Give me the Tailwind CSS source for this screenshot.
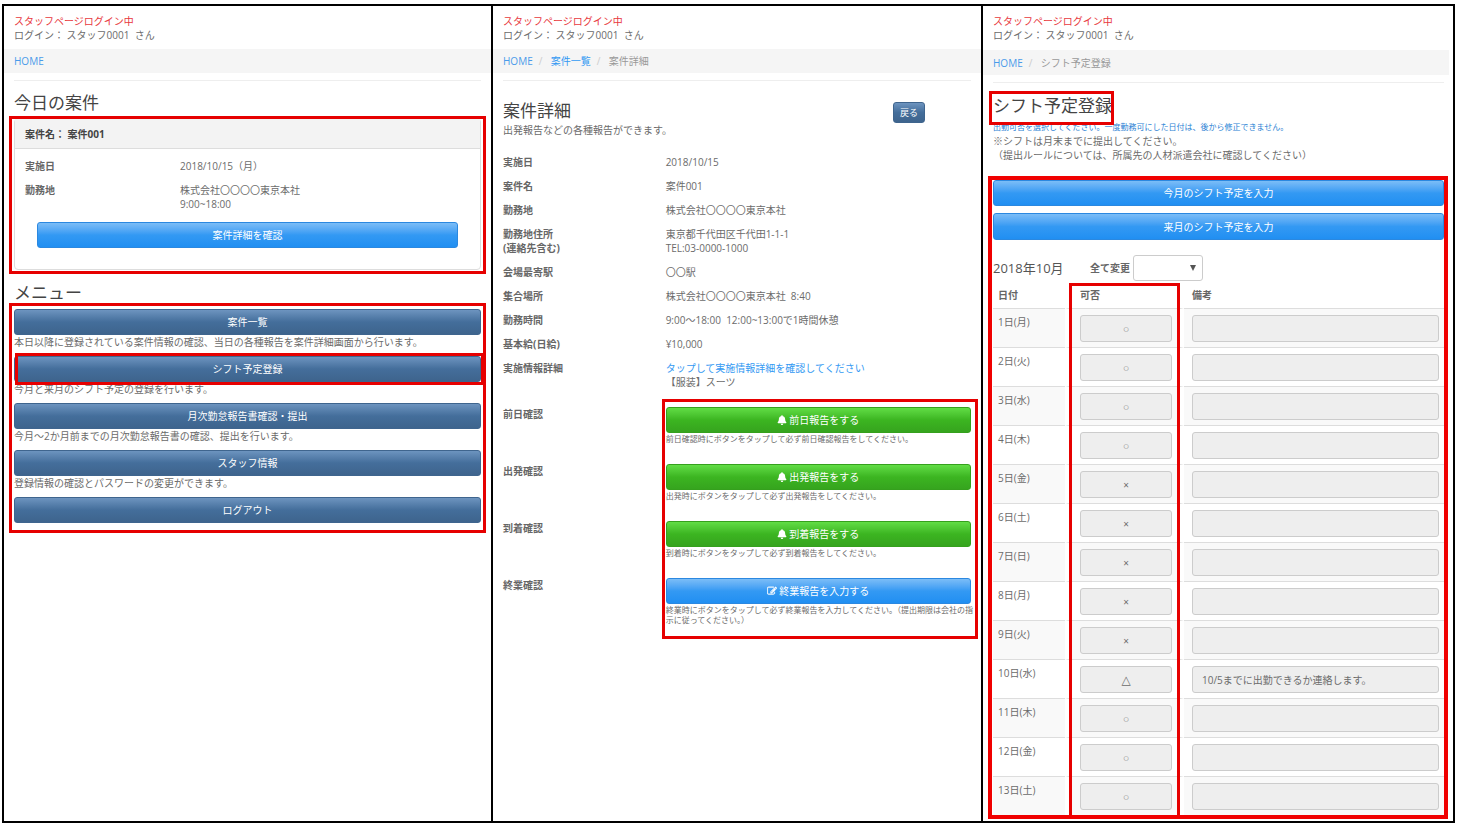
<!DOCTYPE html>
<html lang="ja">
<head>
<meta charset="utf-8">
<meta name="viewport" content="width=device-width, initial-scale=1">
<title>スタッフページ</title>
<script src="https://cdn.jsdelivr.net/npm/@tailwindcss/browser@4"></script>
</head>
<body class="min-h-screen bg-white flex font-['Open_Sans','Noto_Sans_CJK_JP',sans-serif] text-[10px] leading-[14px] text-[#6b6b6b]">

<svg class="hidden" aria-hidden="true">
  <symbol id="bell" viewBox="0 0 448 512"><path d="M224 512c35.32 0 63.97-28.65 63.97-64H160.03c0 35.35 28.65 64 63.97 64zm215.39-149.71c-19.32-20.76-55.47-51.99-55.47-154.29 0-77.7-54.48-139.9-127.94-155.16V32c0-17.67-14.32-32-31.98-32s-31.98 14.33-31.98 32v20.84C118.56 68.1 64.08 130.3 64.08 208c0 102.3-36.15 133.53-55.47 154.29-6 6.45-8.66 14.16-8.61 21.71.11 16.4 12.98 32 32.1 32h383.8c19.12 0 32-15.6 32.1-32 .05-7.55-2.61-15.27-8.61-21.71z"/></symbol>
  <symbol id="edit" viewBox="0 0 1792 1792"><path stroke="currentColor" stroke-width="60" d="M888 1184l116-116-152-152-116 116v56h96v96h56zm440-720q-16-16-33 1l-350 350q-17 17-1 33t33-1l350-350q17-17 1-33zm80 594v190q0 119-84.5 203.5t-203.5 84.5h-832q-119 0-203.5-84.5t-84.5-203.5v-832q0-119 84.5-203.5t203.5-84.5h832q63 0 117 25 15 7 18 23 3 17-9 29l-49 49q-14 14-32 8-23-6-45-6h-832q-66 0-113 47t-47 113v832q0 66 47 113t113 47h832q66 0 113-47t47-113v-126q0-13 9-22l64-64q15-15 35-7t20 29zm-96-738l288 288-672 672h-288v-288zm444 132l-92 92-288-288 92-92q28-28 68-28t68 28l152 152q28 28 28 68t-28 68z"/></symbol>
</svg>

<main class="grow grid grid-cols-[489fr_490fr_474fr] pt-1 pb-px pl-[2px] pr-[3px]">

  <!-- ホーム -->
  <section class="border-2 border-r-0 border-black">
    <header class="px-[10px] pt-2 pb-[7px]">
      <p class="text-[#e8383d]">スタッフページログイン中</p>
      <p>ログイン： スタッフ0001&nbsp; さん</p>
    </header>
    <nav class="bg-[#f5f5f5] h-6 px-[10px] flex items-center" aria-label="パンくず">
      <a href="#" class="text-[#4a9bea]">HOME</a>
    </nav>
    <div class="px-[10px]">
      <hr class="mt-[7px] border-[#eeeeee]">
      <h2 class="mt-3 text-[17px] leading-5 text-[#444444]">今日の案件</h2>
      <div class="relative mt-[5px]">
        <article class="border border-[#dddddd] rounded-sm">
          <h3 class="bg-[#f3f3f3] border-b border-[#dddddd] px-[10px] h-[30px] flex items-center font-bold text-[#444444]">案件名： 案件001</h3>
          <dl class="pt-[10px] grid grid-cols-3 gap-y-[10px]">
            <dt class="px-[10px] font-bold text-[#666666]">実施日</dt>
            <dd class="px-[10px] col-span-2">2018/10/15（月）</dd>
            <dt class="px-[10px] font-bold text-[#666666]">勤務地</dt>
            <dd class="px-[10px] col-span-2">株式会社〇〇〇〇東京本社<br>9:00~18:00</dd>
          </dl>
          <div class="px-[22px] pt-[11px] pb-[21px]">
            <button type="button" class="block w-full h-[26px] rounded-[3px] border border-[#2b88e0] bg-linear-to-b from-[#7bbdf7] via-[#3399f3] to-[#208ff2] text-white">案件詳細を確認</button>
          </div>
        </article>
        <div class="absolute -inset-x-[5px] -top-[2px] -bottom-1 border-3 border-[#e60000] pointer-events-none"></div>
      </div>

      <h2 class="mt-[13px] text-[17px] leading-5 text-[#444444]">メニュー</h2>
      <div class="relative mt-[6px]">
        <ul class="flex flex-col gap-[7px]">
          <li>
            <button type="button" class="block w-full h-[26px] rounded-[3px] border border-[#3f658e] bg-linear-to-b from-[#6d94bf] via-[#446e9b] to-[#3e648d] text-white">案件一覧</button>
            <p>本日以降に登録されている案件情報の確認、当日の各種報告を案件詳細画面から行います。</p>
          </li>
          <li class="relative">
            <button type="button" class="block w-full h-[26px] rounded-[3px] border border-[#3f658e] bg-linear-to-b from-[#6d94bf] via-[#446e9b] to-[#3e648d] text-white">シフト予定登録</button>
            <p>今月と来月のシフト予定の登録を行います。</p>
            <div class="absolute left-px -right-[3px] -top-[3px] h-8 border-3 border-[#e60000] pointer-events-none"></div>
          </li>
          <li>
            <button type="button" class="block w-full h-[26px] rounded-[3px] border border-[#3f658e] bg-linear-to-b from-[#6d94bf] via-[#446e9b] to-[#3e648d] text-white">月次勤怠報告書確認・提出</button>
            <p>今月～2か月前までの月次勤怠報告書の確認、提出を行います。</p>
          </li>
          <li>
            <button type="button" class="block w-full h-[26px] rounded-[3px] border border-[#3f658e] bg-linear-to-b from-[#6d94bf] via-[#446e9b] to-[#3e648d] text-white">スタッフ情報</button>
            <p>登録情報の確認とパスワードの変更ができます。</p>
          </li>
          <li>
            <button type="button" class="block w-full h-[26px] rounded-[3px] border border-[#3f658e] bg-linear-to-b from-[#6d94bf] via-[#446e9b] to-[#3e648d] text-white">ログアウト</button>
          </li>
        </ul>
        <div class="absolute -inset-x-[5px] -top-[6px] -bottom-[10px] border-3 border-[#e60000] pointer-events-none"></div>
      </div>
    </div>
  </section>

  <!-- 案件詳細 -->
  <section class="border-2 border-r-0 border-black">
    <header class="px-[10px] pt-2 pb-[7px]">
      <p class="text-[#e8383d]">スタッフページログイン中</p>
      <p>ログイン： スタッフ0001&nbsp; さん</p>
    </header>
    <nav class="bg-[#f5f5f5] h-6 px-[10px] flex items-center" aria-label="パンくず">
      <a href="#" class="text-[#4a9bea]">HOME</a>
      <span class="w-[18px] pr-[2px] text-center text-[#cccccc]">/</span>
      <a href="#" class="text-[#3399f3]">案件一覧</a>
      <span class="w-[18px] pr-[2px] text-center text-[#cccccc]">/</span>
      <span class="text-[#999999]">案件詳細</span>
    </nav>
    <hr class="mx-[10px] mt-[7px] border-[#eeeeee]">
    <div class="mt-5 px-[10px] flex items-start justify-between">
      <div>
        <h2 class="text-[17px] leading-5 text-[#444444]">案件詳細</h2>
        <p class="mt-[2px]">出発報告などの各種報告ができます。</p>
      </div>
      <button type="button" class="mr-[46px] mt-px w-8 h-[21px] rounded-[3px] border border-[#3f658e] bg-linear-to-b from-[#6d94bf] via-[#446e9b] to-[#3e648d] text-white text-[9px] leading-3">戻る</button>
    </div>
    <dl class="mt-[18px] grid grid-cols-3 gap-y-[10px]">
      <dt class="px-[10px] font-bold text-[#666666]">実施日</dt>
      <dd class="px-[10px] col-span-2">2018/10/15</dd>
      <dt class="px-[10px] font-bold text-[#666666]">案件名</dt>
      <dd class="px-[10px] col-span-2">案件001</dd>
      <dt class="px-[10px] font-bold text-[#666666]">勤務地</dt>
      <dd class="px-[10px] col-span-2">株式会社〇〇〇〇東京本社</dd>
      <dt class="px-[10px] font-bold text-[#666666]">勤務地住所<br>(連絡先含む)</dt>
      <dd class="px-[10px] col-span-2">東京都千代田区千代田1-1-1<br>TEL:03-0000-1000</dd>
      <dt class="px-[10px] font-bold text-[#666666]">会場最寄駅</dt>
      <dd class="px-[10px] col-span-2">〇〇駅</dd>
      <dt class="px-[10px] font-bold text-[#666666]">集合場所</dt>
      <dd class="px-[10px] col-span-2">株式会社〇〇〇〇東京本社&nbsp; 8:40</dd>
      <dt class="px-[10px] font-bold text-[#666666]">勤務時間</dt>
      <dd class="px-[10px] col-span-2">9:00～18:00&nbsp; 12:00~13:00で1時間休憩</dd>
      <dt class="px-[10px] font-bold text-[#666666]">基本給(日給)</dt>
      <dd class="px-[10px] col-span-2">¥10,000</dd>
      <dt class="px-[10px] font-bold text-[#666666]">実施情報詳細</dt>
      <dd class="px-[10px] col-span-2"><a href="#" class="text-[#3399f3]">タップして実施情報詳細を確認してください</a><br>【服装】スーツ</dd>
    </dl>
    <div class="relative mt-[18px]">
      <dl class="grid grid-cols-3 auto-rows-[57px]">
        <dt class="px-[10px] font-bold text-[#666666]">前日確認</dt>
        <dd class="px-[10px] col-span-2 text-[8px] leading-[10px]">
          <button type="button" class="flex items-center justify-center gap-[2px] w-full h-[26px] rounded-[3px] border border-[#35a01d] bg-linear-to-b from-[#61dd45] via-[#3cb521] to-[#36a41e] text-white text-[10px] leading-[14px]"><svg class="size-[10px] fill-current"><use href="#bell"/></svg>前日報告をする</button>
          <p class="mt-px">前日確認時にボタンをタップして必ず前日確認報告をしてください。</p>
        </dd>
        <dt class="px-[10px] font-bold text-[#666666]">出発確認</dt>
        <dd class="px-[10px] col-span-2 text-[8px] leading-[10px]">
          <button type="button" class="flex items-center justify-center gap-[2px] w-full h-[26px] rounded-[3px] border border-[#35a01d] bg-linear-to-b from-[#61dd45] via-[#3cb521] to-[#36a41e] text-white text-[10px] leading-[14px]"><svg class="size-[10px] fill-current"><use href="#bell"/></svg>出発報告をする</button>
          <p class="mt-px">出発時にボタンをタップして必ず出発報告をしてください。</p>
        </dd>
        <dt class="px-[10px] font-bold text-[#666666]">到着確認</dt>
        <dd class="px-[10px] col-span-2 text-[8px] leading-[10px]">
          <button type="button" class="flex items-center justify-center gap-[2px] w-full h-[26px] rounded-[3px] border border-[#35a01d] bg-linear-to-b from-[#61dd45] via-[#3cb521] to-[#36a41e] text-white text-[10px] leading-[14px]"><svg class="size-[10px] fill-current"><use href="#bell"/></svg>到着報告をする</button>
          <p class="mt-px">到着時にボタンをタップして必ず到着報告をしてください。</p>
        </dd>
        <dt class="px-[10px] font-bold text-[#666666]">終業確認</dt>
        <dd class="px-[10px] col-span-2 text-[8px] leading-[10px]">
          <button type="button" class="flex items-center justify-center gap-[2px] w-full h-[26px] rounded-[3px] border border-[#2b88e0] bg-linear-to-b from-[#7bbdf7] via-[#3399f3] to-[#208ff2] text-white text-[10px] leading-[14px]"><svg class="size-[10px] fill-current"><use href="#edit"/></svg>終業報告を入力する</button>
          <p class="mt-px -mr-1">終業時にボタンをタップして必ず終業報告を入力してください。（提出期限は会社の指示に従ってください。）</p>
        </dd>
      </dl>
      <div class="absolute inset-x-0 -top-2 -bottom-1 grid grid-cols-3 pointer-events-none">
        <div class="col-start-2 col-span-2 ml-[6px] mr-[3px] border-3 border-[#e60000]"></div>
      </div>
    </div>
  </section>

  <!-- シフト予定登録 -->
  <section class="border-2 border-black">
    <header class="px-[10px] pt-2 pb-2">
      <p class="text-[#e8383d]">スタッフページログイン中</p>
      <p>ログイン： スタッフ0001&nbsp; さん</p>
    </header>
    <nav class="bg-[#f5f5f5] h-[25px] mr-1 px-[10px] flex items-center" aria-label="パンくず">
      <a href="#" class="text-[#4a9bea]">HOME</a>
      <span class="w-[18px] pr-[2px] text-center text-[#cccccc]">/</span>
      <span class="text-[#999999]">シフト予定登録</span>
    </nav>
    <div class="pl-[10px] pr-[9px] pb-[5px]">
      <hr class="mt-[7px] border-[#eeeeee]">
      <div class="relative mt-[13px] w-fit z-10">
        <h2 class="text-[17px] leading-5 text-[#444444]">シフト予定登録</h2>
        <div class="absolute -left-1 -right-[2px] -top-[5px] -bottom-[9px] border-3 border-[#e60000] pointer-events-none"></div>
      </div>
      <p class="mt-[6px] text-[8px] leading-[10px] text-[#2a7fd4]">出勤可否を選択してください。一度勤務可にした日付は、後から修正できません。</p>
      <p class="mt-[2px]">※シフトは月末までに提出してください。<br>（提出ルールについては、所属先の人材派遣会社に確認してください）</p>

      <div class="relative mt-[18px]">
        <button type="button" class="block w-full h-[26px] rounded-[3px] border border-[#2b88e0] bg-linear-to-b from-[#7bbdf7] via-[#3399f3] to-[#208ff2] text-white">今月のシフト予定を入力</button>
        <button type="button" class="mt-[7px] block w-full h-[27px] rounded-[3px] border border-[#2b88e0] bg-linear-to-b from-[#7bbdf7] via-[#3399f3] to-[#208ff2] text-white">来月のシフト予定を入力</button>
        <div class="mt-[15px] flex items-center">
          <h3 class="w-[97px] text-[13px] leading-4 text-[#555555]">2018年10月</h3>
          <label for="all" class="w-[43px] font-bold text-[#666666]">全て変更</label>
          <div class="relative">
            <select id="all" class="block appearance-none w-[70px] h-[26px] rounded-[3px] border border-[#cccccc] bg-white px-2"><option></option><option>○</option><option>△</option><option>×</option></select>
            <svg class="absolute right-[7px] top-[10px] w-[6px] h-[6px] fill-[#555555] pointer-events-none" viewBox="0 0 6 6"><path d="M0 0h6L3 6z"/></svg>
          </div>
        </div>
        <div class="relative">
          <table class="w-full table-fixed border-separate border-spacing-0">
            <thead>
              <tr class="h-[27px] text-left text-[#666666]">
                <th class="w-[72px] pl-[5px]">日付</th>
                <th class="w-[119px] pl-[15px]">可否</th>
                <th class="pl-2">備考</th>
              </tr>
            </thead>
            <tbody id="days"></tbody>
          </table>
          <div class="absolute left-[76px] w-[111px] top-[2px] -bottom-[3px] border-3 border-[#e60000] pointer-events-none"></div>
        </div>
        <div class="absolute -left-[5px] -right-1 -top-1 -bottom-1 border-4 border-[#f00000] pointer-events-none"></div>
      </div>
    </div>
  </section>
</main>

<script>
  const days = [
    ['1日(月)', '○'], ['2日(火)', '○'], ['3日(水)', '○'], ['4日(木)', '○'],
    ['5日(金)', '×'], ['6日(土)', '×'], ['7日(日)', '×'], ['8日(月)', '×'], ['9日(火)', '×'],
    ['10日(水)', '△', '10/5までに出勤できるか連絡します。'],
    ['11日(木)', '○'], ['12日(金)', '○'], ['13日(土)', '○']
  ];
  const markSize = { '○': 'text-[6px]', '×': 'text-[10px]', '△': 'text-[12px]' };
  document.getElementById('days').innerHTML = days.map(([day, mark, note = '']) => `
    <tr class="odd:bg-[#f9f9f9] align-top">
      <td class="border-t border-[#dddddd] pt-[6px] pl-[5px]">${day}</td>
      <td class="border-t border-x-4 border-t-[#dddddd] border-x-white pt-[6px] pb-[5px] pl-[11px] pr-2">
        <select disabled aria-label="${day} 可否" class="block appearance-none w-full h-[27px] rounded-[3px] border border-[#cccccc] bg-[#eeeeee] text-center opacity-100 text-[#6b6b6b] font-['Open_Sans','DejaVu_Sans',sans-serif] ${markSize[mark]}"><option>${mark}</option></select>
      </td>
      <td class="border-t border-[#dddddd] pt-[6px] pb-[5px] pl-2 pr-[5px]">
        <input disabled aria-label="${day} 備考" value="${note}" class="block w-full h-[27px] rounded-[3px] border border-[#cccccc] bg-[#eeeeee] px-[9px] text-[#6b6b6b]">
      </td>
    </tr>`).join('');
</script>
</body>
</html>
